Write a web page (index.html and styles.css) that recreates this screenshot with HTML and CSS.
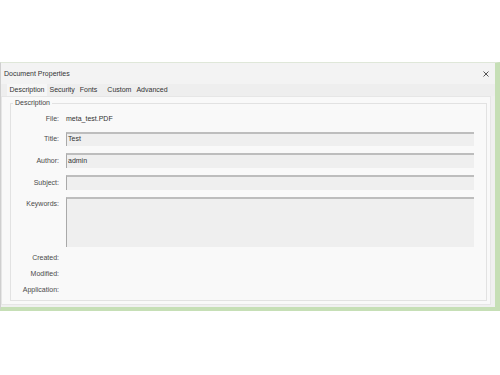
FILE: index.html
```html
<!DOCTYPE html>
<html>
<head>
<meta charset="utf-8">
<link rel="stylesheet" href="styles.css">
</head>
<body>
<div class="dialog">
  <div class="titlebar">
    <span class="title">Document Properties</span>
    <svg class="close" width="6" height="6" viewBox="0 0 6 6"><path d="M0.5 0.5L5.5 5.5M5.5 0.5L0.5 5.5" stroke="#555" stroke-width="1" fill="none"/></svg>
  </div>
  <div class="tabs">
    <span class="tab active">Description</span>
    <span class="tab">Security</span>
    <span class="tab">Fonts</span>
    <span class="tab custom">Custom</span>
    <span class="tab">Advanced</span>
  </div>
  <div class="panel">
    <fieldset class="group">
      <legend class="legend">Description</legend>
      <div class="fields">
        <div class="row row-file"><span class="label">File:</span><span class="value">meta_test.PDF</span></div>
        <div class="row"><span class="label">Title:</span><div class="input h14">Test</div></div>
        <div class="row"><span class="label">Author:</span><div class="input h15">admin</div></div>
        <div class="row"><span class="label">Subject:</span><div class="input h15"></div></div>
        <div class="row row-top"><span class="label">Keywords:</span><div class="input h50"></div></div>
      </div>
      <div class="dates">
        <div class="row row-date"><span class="label">Created:</span><span class="value"></span></div>
        <div class="row row-date"><span class="label">Modified:</span><span class="value"></span></div>
        <div class="row row-date"><span class="label">Application:</span><span class="value"></span></div>
      </div>
    </fieldset>
  </div>
</div>
</body>
</html>
```
FILE: styles.css
```css
html, body {
  margin: 0;
  padding: 0;
  background: #ffffff;
}
body {
  width: 500px;
  height: 375px;
  font-family: "Liberation Sans", Arial, sans-serif;
  font-size: 7px;
  color: #333;
  overflow: hidden;
}
.dialog {
  margin-top: 62px;
  width: 500px;
  box-sizing: border-box;
  background: #f0f0f0;
  border-top: 1px solid #dfe7d9;
  border-left: 1px solid #cfcfcf;
  border-right: 5px solid #c6dfb6;
  border-bottom: 4px solid #c6dfb6;
}
.titlebar {
  height: 21px;
  display: flex;
  align-items: center;
  justify-content: space-between;
  padding: 0 6px 0 3px;
  background: #f3f3f3;
}
.title {
  color: #333;
  line-height: 8px;
  margin-top: 1px;
}
.close {
  display: block;
}
.tabs {
  height: 12px;
  display: flex;
  align-items: stretch;
  padding-left: 6px;
  background: #eeeeee;
}
.tab {
  display: flex;
  align-items: center;
  padding: 0 2.5px;
  color: #333;
  line-height: 8px;
}
.tab.active {
  background: #f6f6f6;
}
.tab.custom {
  margin-left: 5px;
}
.panel {
  margin: 0 4px 2px 0;
  background: #f9f9f9;
  border: 1px solid #e6e6e6;
  padding: 2px 3px 3px 8px;
}
.group {
  margin: 0;
  padding: 6px 12px 4px 0;
  border: 1px solid #e2e2e2;
  min-width: 0;
}
.legend {
  padding: 0 2px;
  margin-left: 2px;
  line-height: 8px;
  color: #444;
}
.fields {
  display: flex;
  flex-direction: column;
  gap: 7px;
}
.dates {
  margin-top: 5px;
  display: flex;
  flex-direction: column;
  gap: 4px;
}
.row {
  display: flex;
  align-items: center;
  gap: 7px;
}
.row-top {
  align-items: flex-start;
}
.row-top .label {
  padding-top: 3px;
}
.row-file, .row-date {
  height: 12px;
}
.label {
  width: 48px;
  flex: none;
  text-align: right;
  color: #4a4a4a;
  line-height: 8px;
}
.value {
  color: #333;
  line-height: 8px;
}
.input {
  flex: 1;
  box-sizing: border-box;
  background: #efefef;
  border-top: 2px solid #bdbdbd;
  border-left: 1px solid #a9a9a9;
  padding: 1px 0 0 1px;
  line-height: 8px;
  color: #333;
}
.h14 { height: 14px; }
.h15 { height: 15px; padding-top: 2px; }
.h50 { height: 50px; }
```
